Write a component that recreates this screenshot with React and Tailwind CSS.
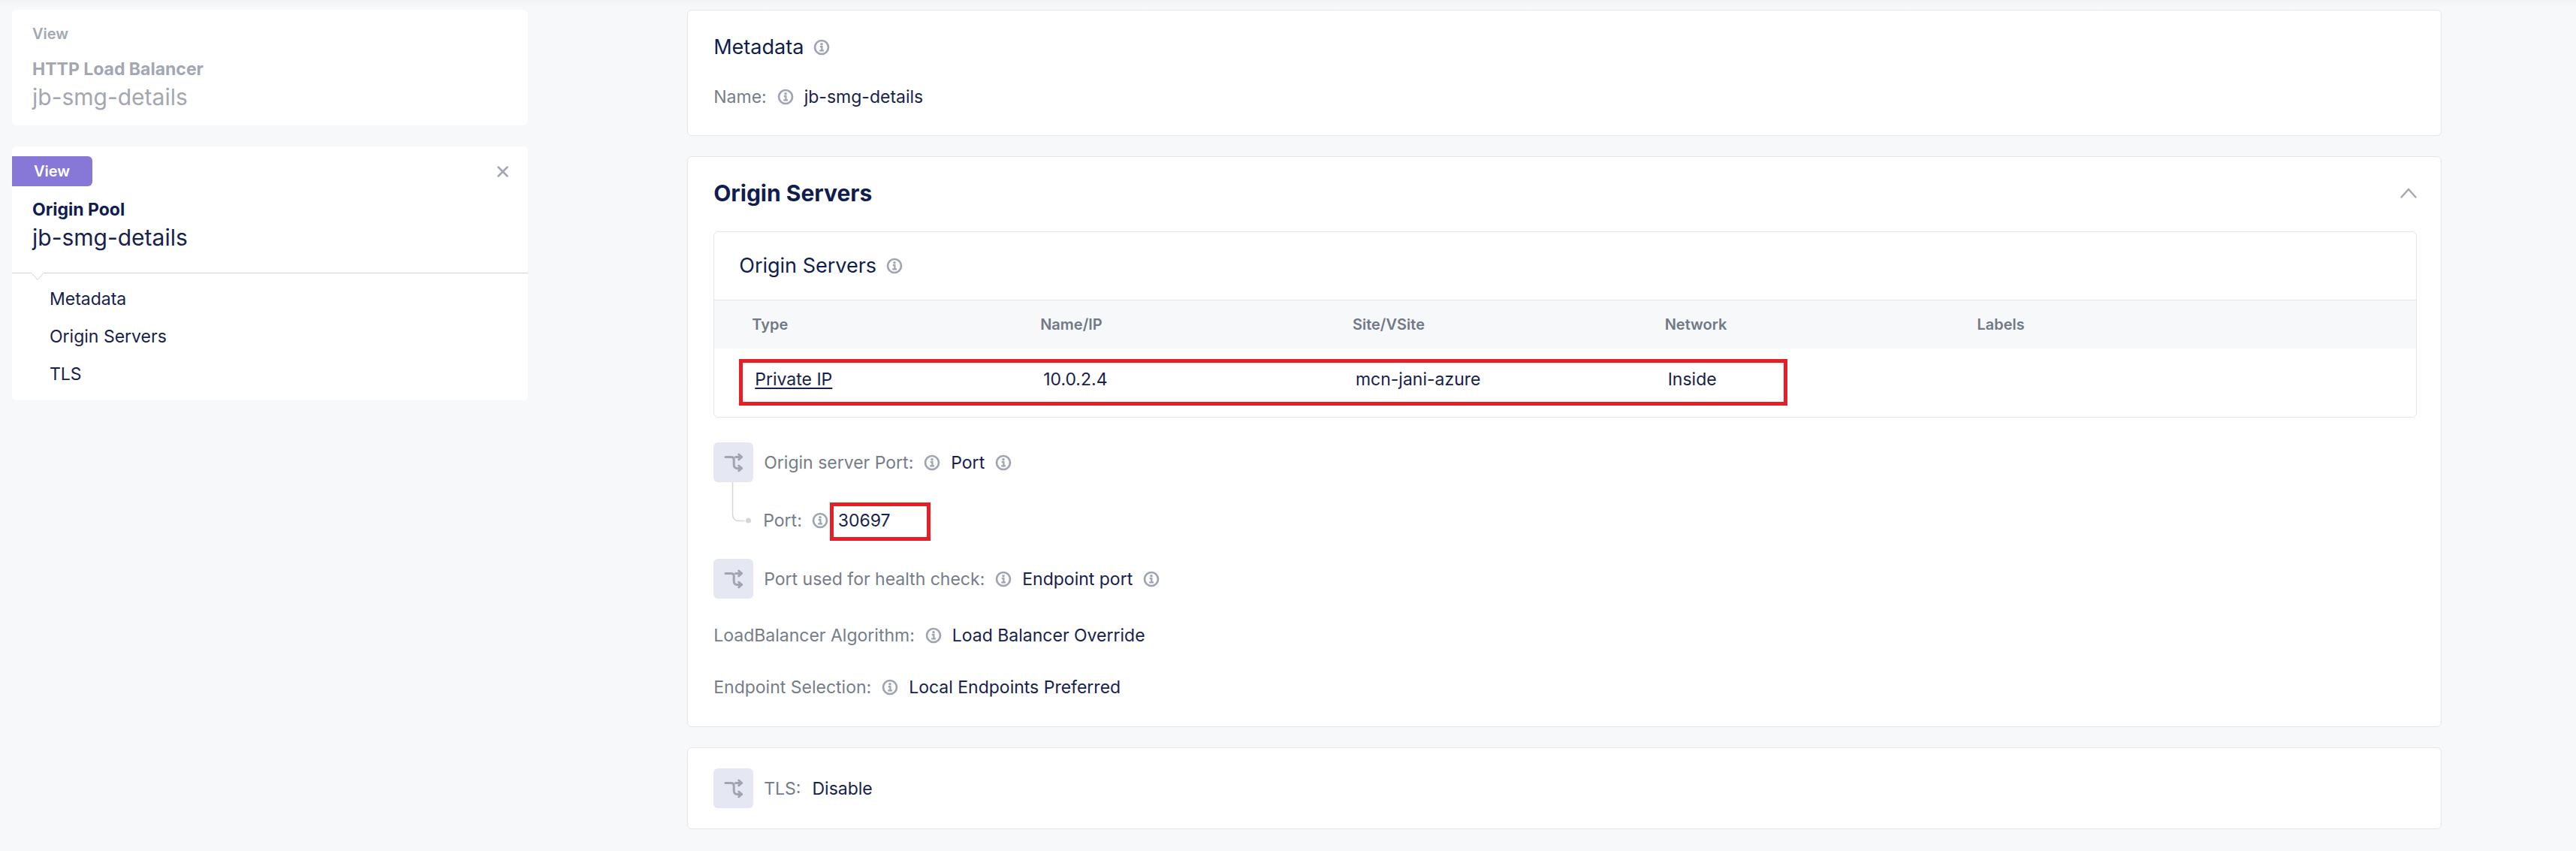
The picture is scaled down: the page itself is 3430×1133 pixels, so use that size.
function InfoIcon({ label }) {
  return (
    <button type="button" aria-label={`About ${label}`} className="shrink-0 text-[#9fa4b2]">
      <svg viewBox="0 0 20 20" className="block size-5 overflow-visible" fill="none">
        <circle cx="10" cy="10" r="9" stroke="currentColor" strokeWidth="2.7" />
        <circle cx="10" cy="5.8" r="1.8" fill="currentColor" />
        <path d="M7.8 9.2h2.6v5M7.2 14.4h5.8" stroke="currentColor" strokeWidth="2.2" />
      </svg>
    </button>
  );
}

function BranchIcon() {
  return (
    <span className="flex size-[53px] shrink-0 items-center justify-center rounded-md bg-[#e5e7f2] text-[#a0a4b3]">
      <svg viewBox="0 0 26 26" className="block size-[26px]" fill="none" stroke="currentColor" strokeWidth="3" strokeLinecap="round" strokeLinejoin="round">
        <path d="M2 5.4h7.600c2.600 0 3.600 1.400 3.600 3.600v6.400c0 3.600 1.600 5 4.400 5H23.500" />
        <path d="M15.500 5.400h8M19.700 2l3.800 3.400-3.800 3.400" />
        <path d="M19.700 17l3.800 3.400-3.800 3.400" />
      </svg>
    </span>
  );
}

function Field({ label, value, info = true, valueInfo = false }) {
  return (
    <div className="flex items-center gap-[15px] text-[23px] leading-8">
      <span className="text-[#757d8a]">{label}:</span>
      {info && <InfoIcon label={label} />}
      <span className="text-[#16224d]">{value}</span>
      {valueInfo && <InfoIcon label={value} />}
    </div>
  );
}

function Card({ className, children }) {
  return (
    <section className={`rounded-md border border-[#e4e6eb] bg-white pr-8 pl-[34px] ${className}`}>
      {children}
    </section>
  );
}

const sections = ["Metadata", "Origin Servers", "TLS"];
const columns = ["Type", "Name/IP", "Site/VSite", "Network", "Labels"];

export default function App() {
  return (
    <div className="flex min-h-screen items-start bg-[#f7f8fa] bg-linear-to-b from-[#f1f2f4] to-[#f7f8fa] to-[8px] pt-[13px] pl-4 font-['Inter',sans-serif] text-[#16224d]">
      <aside className="flex w-[20.13%] shrink-0 flex-col gap-7">
        <section className="rounded-md bg-white px-[27px] pt-5 pb-[18px] text-[#a2a7b3]">
          <div className="text-[20px] leading-6 font-semibold">View</div>
          <div className="mt-[19px] text-[23px] leading-8 font-bold">HTTP Load Balancer</div>
          <div className="mt-px text-[30px] leading-10">jb-smg-details</div>
        </section>

        <section className="rounded-md bg-white pt-[13px]">
          <div className="flex items-center justify-between pr-[26px]">
            <span className="w-[107px] rounded-r-md bg-[#8777d6] pl-[29px] text-[20px] leading-10 font-semibold text-white">View</span>
            <button type="button" aria-label="Close" className="text-[#a2a7b3]">
              <svg viewBox="0 0 15 15" className="block size-[15px]" stroke="currentColor" strokeWidth="2.5" strokeLinecap="round">
                <path d="M1.500 1.500l12 12M13.500 1.500l-12 12" />
              </svg>
            </button>
          </div>
          <div className="px-[27px] pt-[15px] pb-[27px]">
            <div className="text-[23px] leading-8 font-bold text-[#101d50]">Origin Pool</div>
            <div className="mt-px text-[30px] leading-10">jb-smg-details</div>
          </div>
          <div className="relative border-t border-[#d0d2d6]">
            <svg viewBox="0 0 18 12" className="absolute -top-0.5 left-[25px] h-3 w-[18px]" fill="none">
              <path d="M1 0h16v2L9 11 1 2z" fill="#fff" />
              <path d="M1 1.500l8 9 8-9" stroke="#d0d2d6" />
            </svg>
            <nav className="flex flex-col items-start gap-[18px] pt-[18px] pb-[19px] pl-[50px] text-[23px] leading-8">
              {sections.map((s) => (
                <a key={s} href={`#${s}`}>{s}</a>
              ))}
            </nav>
          </div>
        </section>
      </aside>

      <main className="mr-[179px] ml-[212px] flex min-w-0 flex-1 flex-col gap-[27px]">
        <Card className="pt-[29px] pb-[35px]">
          <div className="flex items-center gap-3.5">
            <h2 className="text-[27px] leading-10 text-[#101d50]">Metadata</h2>
            <InfoIcon label="Metadata" />
          </div>
          <div className="mt-[30px]">
            <Field label="Name" value="jb-smg-details" />
          </div>
        </Card>

        <Card className="pt-7 pb-9">
          <div className="flex items-center justify-between">
            <h2 className="text-[30px] leading-10 font-bold text-[#101d50]">Origin Servers</h2>
            <button type="button" aria-label="Collapse Origin Servers" className="text-[#a2a7b3]">
              <svg viewBox="0 0 22 14" className="block h-3.5 w-[22px]" fill="none" stroke="currentColor" strokeWidth="2.4" strokeLinecap="round">
                <path d="M1.500 12.500L11 2l9.500 10.500" />
              </svg>
            </button>
          </div>

          <div className="relative mt-[31px] rounded-md border border-[#e4e6eb]">
            <div className="flex h-[91px] items-center gap-3.5 border-b border-[#e4e6eb] pl-[33px]">
              <h3 className="text-[27px] leading-10 text-[#101d50]">Origin Servers</h3>
              <InfoIcon label="Origin Servers" />
            </div>
            <table className="w-full table-fixed text-left">
              <colgroup>
                <col className="w-[19.15%]" />
                <col className="w-[18.35%]" />
                <col className="w-[18.35%]" />
                <col className="w-[18.35%]" />
                <col />
              </colgroup>
              <thead className="bg-[#f7f8fa] text-[20px] leading-6 text-[#717986]">
                <tr className="h-16">
                  {columns.map((c) => (
                    <th key={c} className="font-semibold first:pl-[50px]">{c}</th>
                  ))}
                </tr>
              </thead>
              <tbody className="text-[23px] leading-8">
                <tr>
                  <td className="pt-[25px] pb-[34px] pl-[54px]">
                    <a href="#private-ip" className="underline decoration-2 underline-offset-3">Private IP</a>
                  </td>
                  <td className="pt-[25px] pb-[34px] pl-1">10.0.2.4</td>
                  <td className="pt-[25px] pb-[34px] pl-1">mcn-jani-azure</td>
                  <td className="pt-[25px] pb-[34px] pl-1">Inside</td>
                  <td />
                </tr>
              </tbody>
            </table>
            <div className="pointer-events-none absolute bottom-[15px] left-[33px] h-[62px] w-[61.6%] border-5 border-[#e61e26]" />
          </div>

          <div className="mt-[33px] flex items-center gap-3.5">
            <BranchIcon />
            <Field label="Origin server Port" value="Port" valueInfo />
          </div>

          <div className="flex items-start">
            <svg viewBox="0 0 66 60" className="h-[60px] w-[66px] shrink-0" fill="none">
              <path d="M25.500 0v43c0 4.500 3 8.500 8 8.500h8" stroke="#d3d6de" strokeWidth="1.500" />
              <circle cx="46.500" cy="51" r="3.500" fill="#d3d6de" />
            </svg>
            <div className="flex items-center gap-3.5 pt-[35px] text-[23px] leading-8">
              <span className="text-[#757d8a]">Port:</span>
              <InfoIcon label="Port" />
              <span className="relative">
                30697
                <span className="pointer-events-none absolute -top-2 -left-[11px] h-[51px] w-[134px] border-5 border-[#e61e26]" />
              </span>
            </div>
          </div>

          <div className="mt-[35px] flex items-center gap-3.5">
            <BranchIcon />
            <Field label="Port used for health check" value="Endpoint port" valueInfo />
          </div>

          <div className="mt-[33px] flex flex-col gap-[37px]">
            <Field label="LoadBalancer Algorithm" value="Load Balancer Override" />
            <Field label="Endpoint Selection" value="Local Endpoints Preferred" />
          </div>
        </Card>

        <Card className="py-[27px]">
          <div className="flex items-center gap-3.5">
            <BranchIcon />
            <Field label="TLS" value="Disable" info={false} />
          </div>
        </Card>
      </main>
    </div>
  );
}
